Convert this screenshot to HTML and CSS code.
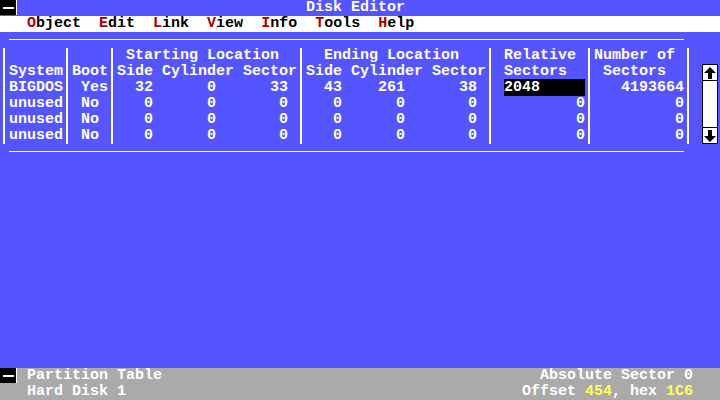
FILE: index.html
```html
<!DOCTYPE html>
<html lang="en">
<head>
    <meta charset="UTF-8">
    <meta name="viewport" content="width=device-width, initial-scale=1.0">
    <title>Disk Editor</title>
    <link rel="stylesheet" href="styles.css">
</head>
<body>
    <div class="screen">
        <div class="titlebar">
            <div class="close-box"><span class="close-bar"></span></div>
            <div class="title">Disk Editor</div>
        </div>

        <div class="menubar">
            <span><b class="hot">O</b>bject</span>
            <span><b class="hot">E</b>dit</span>
            <span><b class="hot">L</b>ink</span>
            <span><b class="hot">V</b>iew</span>
            <span><b class="hot">I</b>nfo</span>
            <span><b class="hot">T</b>ools</span>
            <span><b class="hot">H</b>elp</span>
        </div>

        <div class="workarea">
            <div class="rule-row"><div class="rule"></div></div>

            <div class="partition-area">
                <div class="partition">
                    <div class="sep"></div>
                    <div class="col w6">
                        <div></div>
                        <div>System</div>
                        <div>BIGDOS</div>
                        <div>unused</div>
                        <div>unused</div>
                        <div>unused</div>
                    </div>
                    <div class="sep"></div>
                    <div class="col w4">
                        <div></div>
                        <div>Boot</div>
                        <div> Yes</div>
                        <div> No</div>
                        <div> No</div>
                        <div> No</div>
                    </div>
                    <div class="sep"></div>
                    <div class="col w20">
                        <div> Starting Location</div>
                        <div>Side Cylinder Sector</div>
                        <div>  32      0      33</div>
                        <div>   0      0       0</div>
                        <div>   0      0       0</div>
                        <div>   0      0       0</div>
                    </div>
                    <div class="sep"></div>
                    <div class="col w20">
                        <div>  Ending Location</div>
                        <div>Side Cylinder Sector</div>
                        <div>  43    261      38</div>
                        <div>   0      0       0</div>
                        <div>   0      0       0</div>
                        <div>   0      0       0</div>
                    </div>
                    <div class="sep"></div>
                    <div class="col w10">
                        <div> Relative</div>
                        <div> Sectors</div>
                        <div> <span class="cursor">2048     </span></div>
                        <div>         0</div>
                        <div>         0</div>
                        <div>         0</div>
                    </div>
                    <div class="sep"></div>
                    <div class="col w10">
                        <div>Number of</div>
                        <div> Sectors</div>
                        <div>   4193664</div>
                        <div>         0</div>
                        <div>         0</div>
                        <div>         0</div>
                    </div>
                    <div class="sep"></div>
                </div>

                <div class="scrollbar">
                    <div class="scroll-btn scroll-up">
                        <svg width="14" height="14" viewBox="0 0 14 14"><polygon points="7,1 13,7 9,7 9,13 5,13 5,7 1,7" fill="#000"/></svg>
                    </div>
                    <div class="scroll-btn scroll-down">
                        <svg width="14" height="14" viewBox="0 0 14 14"><polygon points="7,13 13,7 9,7 9,1 5,1 5,7 1,7" fill="#000"/></svg>
                    </div>
                </div>
            </div>

            <div class="rule-row"><div class="rule"></div></div>
        </div>

        <div class="statusbar">
            <div class="status-line">
                <div class="status-left">
                    <div class="close-box"><span class="close-bar"></span></div>
                    <span class="status-name">Partition Table</span>
                </div>
                <span>Absolute Sector 0</span>
            </div>
            <div class="status-line status-indent">
                <span>Hard Disk 1</span>
                <span>Offset <span class="yellow">454</span>, hex <span class="yellow">1C6</span></span>
            </div>
        </div>
    </div>
</body>
</html>
```

FILE: styles.css
```css
body {
    margin: 0;
    background: #5555ff;
}

.screen {
    width: 720px;
    height: 400px;
    display: flex;
    flex-direction: column;
    background: #5555ff;
    color: #ffffff;
    font-family: "Liberation Mono", monospace;
    font-weight: bold;
    font-size: 15px;
    line-height: 16px;
    white-space: nowrap;
    overflow: hidden;
}

/* title bar */
.titlebar {
    display: flex;
    height: 16px;
}

.close-box {
    width: 16px;
    height: 15px;
    background: #000000;
    border-right: 1px solid #ffffff;
    display: flex;
    align-items: center;
    justify-content: center;
    margin-right: 1px;
}

.close-bar {
    display: block;
    width: 11px;
    height: 2px;
    background: #ffffff;
}

.title {
    padding-left: 32ch;
}

/* menu */
.menubar {
    display: flex;
    gap: 2ch;
    height: 16px;
    padding-left: 3ch;
    background: #ffffff;
    color: #000000;
}

.hot {
    color: #aa0000;
    font-weight: bold;
}

/* partition table */
.workarea {
    flex: 1;
}

.rule-row {
    height: 16px;
}

.rule {
    width: 75ch;
    margin-left: 1ch;
    padding-top: 7px;
    border-bottom: 1px solid #ffffff;
}

.partition-area {
    display: flex;
    height: 96px;
}

.partition {
    display: flex;
}

.col > div {
    height: 16px;
    white-space: pre;
}

.w4 { width: 4ch; }
.w6 { width: 6ch; }
.w10 { width: 10ch; }
.w20 { width: 20ch; }

.sep {
    width: 1ch;
    background: linear-gradient(#ffffff, #ffffff) no-repeat 3px 0 / 2px 100%;
}

.cursor {
    background: #000000;
}

.scrollbar {
    box-sizing: border-box;
    width: 16px;
    height: 80px;
    margin-top: 16px;
    margin-left: 1ch;
    background: #ffffff;
    border: 1px solid #000000;
    display: flex;
    flex-direction: column;
    justify-content: space-between;
}

.scroll-btn {
    height: 15px;
    display: flex;
    align-items: center;
    justify-content: center;
}

.scroll-up {
    border-bottom: 1px solid #000000;
}

.scroll-down {
    border-top: 1px solid #000000;
}

/* status bar */
.statusbar {
    background: #aaaaaa;
    height: 32px;
}

.status-line {
    display: flex;
    justify-content: space-between;
    height: 16px;
    padding-right: 3ch;
}

.status-left {
    display: flex;
}

.status-name {
    padding-left: 1ch;
}

.status-indent {
    padding-left: 3ch;
}

.yellow {
    color: #ffff55;
}
```
